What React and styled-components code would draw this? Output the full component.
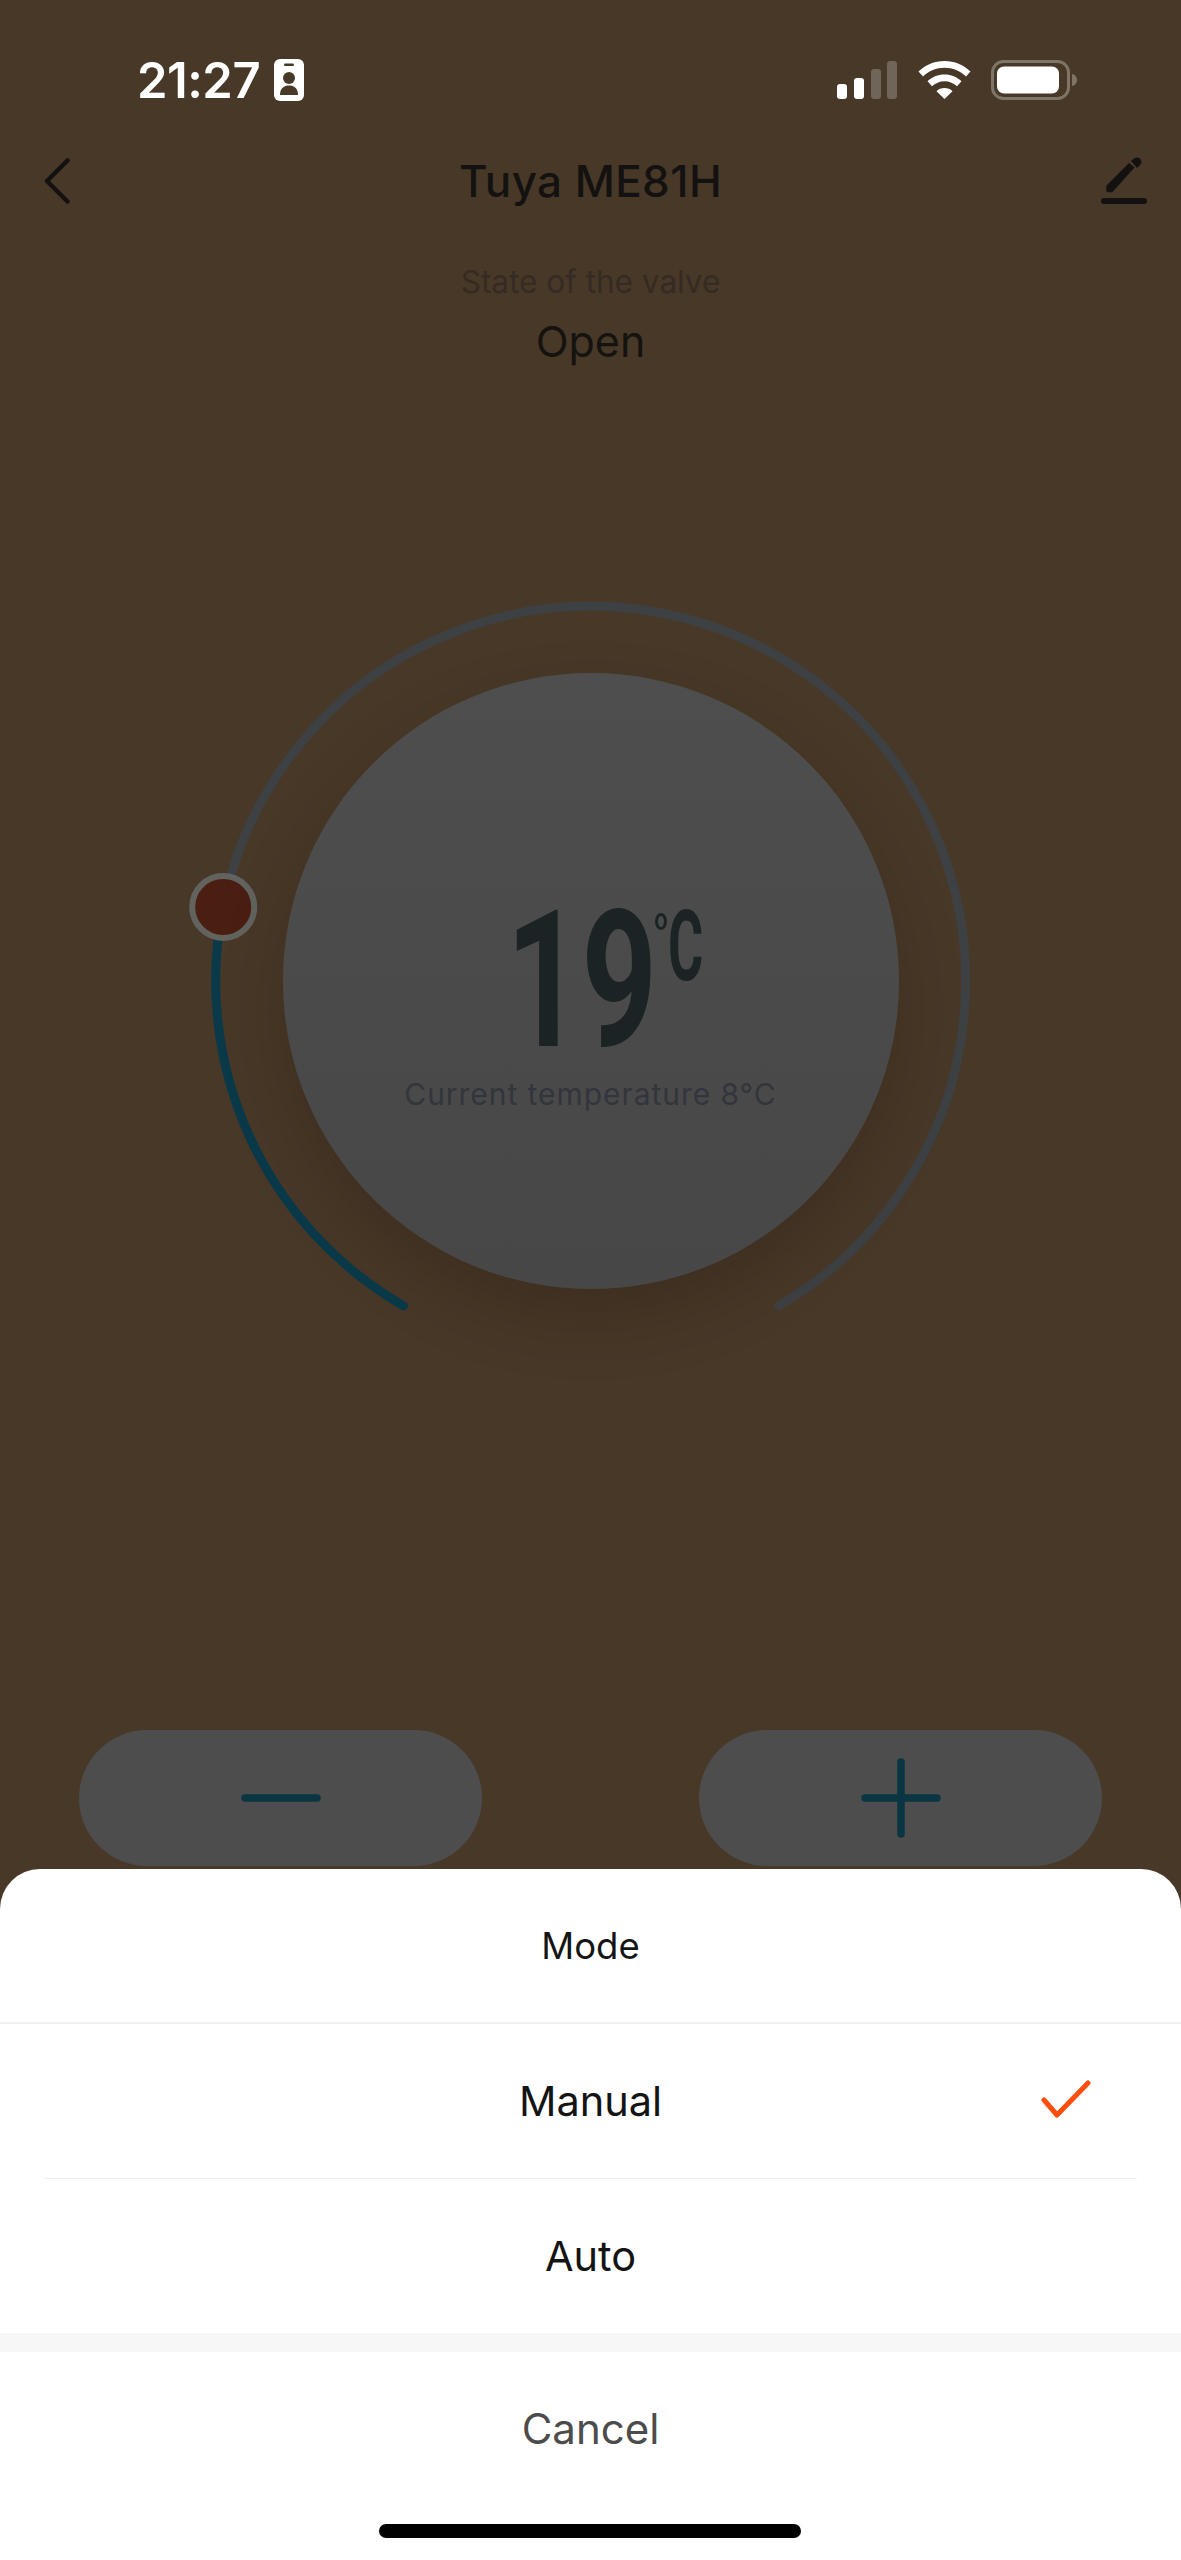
import React from "react";
import styled, { createGlobalStyle } from "styled-components";

const GlobalStyle = createGlobalStyle`
  html, body {
    margin: 0;
    padding: 0;
    background: #483828;
  }
  * {
    box-sizing: border-box;
  }
`;

const Screen = styled.div`
  position: relative;
  display: flex;
  flex-direction: column;
  width: 1181px;
  height: 2560px;
  overflow: hidden;
  background: #483828;
  font-family: Inter, "Noto Sans", sans-serif;
`;

const StatusBar = styled.div`
  display: flex;
  align-items: center;
  justify-content: space-between;
  height: 160px;
  padding: 0 103px 0 137px;
`;

const TimeGroup = styled.div`
  display: flex;
  align-items: center;
  gap: 14px;
`;

const Time = styled.span`
  color: #fff;
  font-size: 49px;
  font-weight: 600;
  line-height: 1;
  letter-spacing: -0.5px;
`;

const StatusIcons = styled.div`
  display: flex;
  align-items: center;
  gap: 20px;
`;

const NavBar = styled.div`
  display: grid;
  grid-template-columns: 1fr auto 1fr;
  align-items: center;
  height: 48px;
  padding: 0 33px;
  margin-top: -3px;
`;

const NavTitle = styled.div`
  color: #141210;
  font-size: 44px;
  font-weight: 500;
  line-height: 48px;
  letter-spacing: 0.4px;
`;

const NavEnd = styled.div`
  display: flex;
  justify-content: ${(props) => (props.$right ? "flex-end" : "flex-start")};
  padding-left: ${(props) => (props.$right ? "0" : "11px")};
`;

const Valve = styled.div`
  display: flex;
  flex-direction: column;
  align-items: center;
  margin-top: 59px;
`;

const ValveLabel = styled.div`
  color: #352b22;
  font-size: 31.5px;
  line-height: 36px;
`;

const ValveValue = styled.div`
  margin-top: 17px;
  color: #15130f;
  font-size: 43px;
  line-height: 48px;
`;

const Dial = styled.div`
  position: relative;
  display: flex;
  align-items: center;
  justify-content: center;
  align-self: center;
  width: 790px;
  height: 790px;
  margin-top: 221px;
`;

const DialArc = styled.svg`
  position: absolute;
  inset: 0;
  overflow: visible;
`;

const Face = styled.div`
  position: relative;
  display: flex;
  flex-direction: column;
  align-items: center;
  width: 616px;
  height: 616px;
  padding-top: 240px;
  border-radius: 50%;
  background: linear-gradient(180deg, #4e4e4e, #474747);
  box-shadow: 0 30px 60px rgba(40, 28, 14, 0.3);
`;

const Reading = styled.div`
  display: flex;
  align-items: flex-start;
  height: 137px;
  margin-left: 26px;
  color: #1b2325;
  font-weight: 700;
`;

const Digits = styled.span`
  display: block;
  width: 149px;
  font-family: Roboto, sans-serif;
  font-size: 191px;
  line-height: 137px;
  transform: scaleX(0.69);
  transform-origin: left center;
  white-space: nowrap;
`;

const Degree = styled.span`
  display: block;
  width: 12px;
  height: 17px;
  margin-top: 0;
  border: 3.5px solid #1b2325;
  border-radius: 50%;
`;

const Unit = styled.span`
  display: block;
  width: 34px;
  margin-left: 1px;
  font-family: Roboto, sans-serif;
  font-size: 98px;
  line-height: 68px;
  transform: scaleX(0.55);
  transform-origin: left center;
`;

const Current = styled.div`
  margin-top: 26px;
  color: #33353c;
  font-size: 30px;
  line-height: 36px;
  letter-spacing: 0.95px;
  white-space: nowrap;
`;

const Controls = styled.div`
  display: flex;
  justify-content: space-between;
  margin-top: 354px;
  padding: 0 79px;
`;

const StepButton = styled.button`
  display: flex;
  align-items: center;
  justify-content: center;
  width: 403px;
  height: 136px;
  padding: 0;
  border: 0;
  border-radius: 68px;
  background: #4d4d4d;
`;

const Sheet = styled.div`
  position: absolute;
  left: 0;
  right: 0;
  bottom: 0;
  height: 691px;
  border-radius: 40px 40px 0 0;
  background: #fff;
`;

const SheetTitle = styled.div`
  display: flex;
  align-items: center;
  justify-content: center;
  height: 155px;
  border-bottom: 2px solid #f0f0f0;
  color: #151515;
  font-size: 36.5px;
`;

const OptionList = styled.div`
  padding: 0 44px;
`;

const Option = styled.div`
  position: relative;
  display: flex;
  align-items: center;
  justify-content: center;
  height: ${(props) => (props.$last ? "154px" : "155px")};
  border-bottom: ${(props) => (props.$last ? "0" : "1px solid #efefef")};
  color: #141414;
  font-size: 41.5px;
`;

const CheckMark = styled.svg`
  position: absolute;
  right: 46px;
  top: 56px;
`;

const Gap = styled.div`
  height: 19px;
  background: #f7f7f7;
`;

const Cancel = styled.div`
  display: flex;
  align-items: center;
  justify-content: center;
  height: 152px;
  color: #4c4c4c;
  font-size: 42px;
`;

const HomeBar = styled.div`
  position: absolute;
  left: 379px;
  bottom: 22px;
  width: 422px;
  height: 14px;
  border-radius: 7px;
  background: #000;
`;

const BadgeIcon = () => (
  <svg width="30" height="42" viewBox="0 0 30 42">
    <rect width="30" height="42" rx="6" fill="#fff" />
    <rect x="10" y="4.5" width="10" height="2.5" rx="1.2" fill="#483828" />
    <circle cx="15" cy="19" r="6" fill="#483828" />
    <path d="M6 36c0-7 4-9.500 9-9.500s9 2.500 9 9.500z" fill="#483828" />
  </svg>
);

const SignalIcon = () => (
  <svg width="61" height="38" viewBox="0 0 61 38">
    <rect x="0" y="23" width="10" height="15" rx="3" fill="#fff" />
    <rect x="17" y="17" width="10" height="21" rx="3" fill="#fff" />
    <rect x="34" y="8" width="10" height="30" rx="3" fill="#6f6558" />
    <rect x="50" y="0" width="10" height="38" rx="3" fill="#6f6558" />
  </svg>
);

const WifiIcon = () => (
  <svg width="53" height="38" viewBox="0 0 53 38">
    <path d="M26.500 0C16.500 0 7.500 4 0.500 10.500l4.500 5C10.800 10 18.300 6.800 26.500 6.800S42.200 10 48 15.500l4.500-5C45.500 4 36.500 0 26.500 0z" fill="#fff" />
    <path d="M26.500 13.500c-6.600 0-12.600 2.600-17 6.800l4.500 5c3.200-3 7.600-5 12.500-5s9.300 2 12.500 5l4.500-5c-4.400-4.200-10.400-6.800-17-6.800z" fill="#fff" />
    <path d="M26.500 27c-3.100 0-6 1.200-8 3.200l8 7.800 8-7.800c-2-2-4.900-3.200-8-3.200z" fill="#fff" />
  </svg>
);

const BatteryIcon = () => (
  <svg width="87" height="40" viewBox="0 0 87 40">
    <rect x="1.500" y="1.500" width="76" height="37" rx="11" fill="none" stroke="#7e7468" strokeWidth="3" />
    <rect x="6" y="6.500" width="62" height="27" rx="7" fill="#fff" />
    <path d="M81 14c3 0.500 5 3 5 6s-2 5.500-5 6z" fill="#7e7468" />
  </svg>
);

const BackIcon = () => (
  <svg width="26" height="46" viewBox="0 0 26 46">
    <path d="M23.500 2.500L3 23l20.500 20.500" fill="none" stroke="#131210" strokeWidth="4.500" strokeLinecap="round" strokeLinejoin="round" />
  </svg>
);

const PenIcon = () => (
  <svg width="48" height="48" viewBox="0 0 48 48">
    <path d="M6.300 28.700L29 6l5.500 4.500-22.200 24.800H8c-1 0-1.700-0.700-1.700-1.700z" fill="#131210" />
    <path d="M31 4l3-2.500c2-1.500 4.500-1.500 6 0s2 4.500 0 6.500l-3 3z" fill="#131210" />
    <rect x="1" y="41" width="46" height="6" rx="3" fill="#131210" />
  </svg>
);

const MinusIcon = () => (
  <svg width="80" height="8" viewBox="0 0 80 8">
    <path d="M4 4h72" stroke="#0a3542" strokeWidth="7.500" strokeLinecap="round" />
  </svg>
);

const PlusIcon = () => (
  <svg width="80" height="80" viewBox="0 0 80 80">
    <path d="M4 40h72M40 4v72" stroke="#0a3542" strokeWidth="7.500" strokeLinecap="round" />
  </svg>
);

export default function App() {
  return (
    <Screen>
      <GlobalStyle />
      <StatusBar>
        <TimeGroup>
          <Time>21:27</Time>
          <BadgeIcon />
        </TimeGroup>
        <StatusIcons>
          <SignalIcon />
          <WifiIcon />
          <BatteryIcon />
        </StatusIcons>
      </StatusBar>

      <NavBar>
        <NavEnd>
          <BackIcon />
        </NavEnd>
        <NavTitle>Tuya ME81H</NavTitle>
        <NavEnd $right>
          <PenIcon />
        </NavEnd>
      </NavBar>

      <Valve>
        <ValveLabel>State of the valve</ValveLabel>
        <ValveValue>Open</ValveValue>
      </Valve>

      <Dial>
        <DialArc width="790" height="790" viewBox="0 0 790 790">
          <path d="M27.200 320.200A375 375 0 1 1 582.500 719.800" fill="none" stroke="#3e4143" strokeWidth="9" strokeLinecap="round" />
          <path d="M207.500 719.800A375 375 0 0 1 27.200 320.200" fill="none" stroke="#0a3a49" strokeWidth="9" strokeLinecap="round" />
          <circle cx="27.200" cy="321" r="31" fill="#4a1e10" stroke="#62625f" strokeWidth="6" />
        </DialArc>
        <Face>
          <Reading>
            <Digits>19</Digits>
            <Degree />
            <Unit>C</Unit>
          </Reading>
          <Current>Current temperature 8°C</Current>
        </Face>
      </Dial>

      <Controls>
        <StepButton>
          <MinusIcon />
        </StepButton>
        <StepButton>
          <PlusIcon />
        </StepButton>
      </Controls>

      <Sheet>
        <SheetTitle>Mode</SheetTitle>
        <OptionList>
          <Option>
            Manual
            <CheckMark width="50" height="38" viewBox="0 0 50 38">
              <path d="M3 20l13 15L47 3" fill="none" stroke="#ff4d0c" strokeWidth="5" strokeLinecap="round" strokeLinejoin="round" />
            </CheckMark>
          </Option>
          <Option $last>Auto</Option>
        </OptionList>
        <Gap />
        <Cancel>Cancel</Cancel>
        <HomeBar />
      </Sheet>
    </Screen>
  );
}
